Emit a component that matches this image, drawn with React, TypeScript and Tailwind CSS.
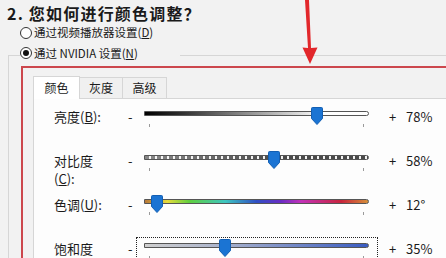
import type { ReactNode } from 'react';

type SliderRow = {
  label: ReactNode;
  value: string;
  pos: number;
  track: string;
  focused?: boolean;
};

const rows: SliderRow[] = [
  {
    label: <>亮度(<u>B</u>):</>,
    value: '78%',
    pos: 173,
    track: 'bg-[linear-gradient(90deg,#000_0%,#2a2a2a_15%,#d8d8d8_68%,#fff_80%,#fff_100%)]'
  },
  {
    label: <>对比度<br />(<u>C</u>):</>,
    value: '58%',
    pos: 130,
    track:
      'bg-[linear-gradient(90deg,rgba(255,255,255,0.35),rgba(255,255,255,0)_60%),repeating-linear-gradient(90deg,#4a4a4a_0px,#4a4a4a_4px,#f2f2f2_4px,#f2f2f2_6px)]'
  },
  {
    label: <>色调(<u>U</u>):</>,
    value: '12°',
    pos: 13,
    track:
      'bg-[linear-gradient(90deg,#b8783a_0%,#e6dc3c_10%,#5fcf3f_20%,#3ec6c0_36%,#2f4fc4_50%,#6a2cc4_61%,#c232b8_70%,#c8243c_88%,#d6903a_100%)]'
  },
  {
    label: <>饱和度</>,
    value: '35%',
    pos: 81,
    track: 'bg-[linear-gradient(90deg,#cfcfcf_0%,#aab3cc_35%,#3a5cc2_100%)]',
    focused: true
  }
];

const Thumb = ({ left }: { left: number }) => (
  <svg
    width="12"
    height="18"
    viewBox="0 0 12 18"
    className="absolute top-[-4px]"
    style={{ left: left - 6 }}
  >
    <path
      d="M1.5 0.5 H10.5 Q11.5 0.5 11.5 1.5 V11.5 L6 17.5 L0.5 11.5 V1.5 Q0.5 0.5 1.5 0.5 Z"
      fill="#1b74d3"
      stroke="#135fb3"
      strokeWidth="1"
    />
  </svg>
);

const Radio = ({ checked }: { checked?: boolean }) => (
  <span className="w-[12px] h-[12px] rounded-full border border-[#333] bg-white flex items-center justify-center shrink-0">
    {checked && <span className="w-[6px] h-[6px] rounded-full bg-[#111]" />}
  </span>
);

export default function App() {
  return (
    <div className="relative w-[446px] h-[258px] overflow-hidden bg-[#f2f2f2] text-[#1a1a1a] font-['Noto_Sans_CJK_SC',sans-serif]">
      <div className="pl-[7px] pt-[4px] h-[22px] text-[16px] leading-[18px] font-bold tracking-[1.2px]">
        2. 您如何进行颜色调整？
      </div>

      <div className="flex items-center gap-[2px] pl-[20px] h-[20px] mt-[1px] mb-[2px] text-[11.5px]">
        <Radio />
        <span>通过视频播放器设置(<u>D</u>)</span>
      </div>

      <fieldset className="ml-[8px] border-l border-t border-[#d6d6d6]">
        <legend className="ml-[11px] w-[160px] h-[20px] pb-[4px] flex items-center gap-[2px] text-[11.5px] leading-[16px]">
          <Radio checked />
          <span>通过 NVIDIA 设置(<u>N</u>)</span>
        </legend>

        <div className="mt-[1px] ml-[12px] w-[440px] border-l-2 border-t-2 border-[#cc474d] pl-[10px] pt-[7px]">
          <div className="flex items-end text-[12px]">
            <div className="w-[47px] h-[23px] bg-white border-l border-t border-r border-[#d6d6d6] flex items-center justify-center relative top-[1px]">
              颜色
            </div>
            <div className="w-[43px] h-[21px] bg-[#f0f0f0] border-t border-r border-[#d6d6d6] flex items-center justify-center">
              灰度
            </div>
            <div className="w-[44px] h-[21px] bg-[#f0f0f0] border-t border-r border-[#d6d6d6] flex items-center justify-center">
              高级
            </div>
          </div>

          <div className="bg-[#fdfdfd] border-l border-t border-[#d6d6d6] pt-[5px] h-[200px] text-[13px] leading-[16px]">
            {rows.map((row, i) => (
              <div key={i} className="flex items-start h-[44px]">
                <div className="w-[92px] pl-[20px] pt-[4px] leading-[18px]">{row.label}</div>
                <div className="w-[10px] pl-[2px] pt-[5px]">-</div>
                <div
                  className={`mt-[1px] border pl-[7px] pr-[8px] pt-[5px] h-[60px] ${
                    row.focused ? 'border-dotted border-[#222]' : 'border-transparent'
                  }`}
                >
                  <div className="relative w-[225px]">
                    <div className={`h-[5px] border border-[#555] rounded-l-[1px] rounded-r-full ${row.track}`} />
                    <Thumb left={row.pos} />
                    <div className="absolute left-[5px] top-[13px] w-px h-[3px] bg-[#9a9a9a]" />
                    <div className="absolute right-[5px] top-[13px] w-px h-[3px] bg-[#9a9a9a]" />
                  </div>
                </div>
                <div className="ml-[11px] w-[17px] pt-[5px]">+</div>
                <div className="pt-[5px]">{row.value}</div>
              </div>
            ))}
          </div>
        </div>
      </fieldset>

      <svg className="absolute left-0 top-0 pointer-events-none" width="446" height="70" viewBox="0 0 446 70">
        <path d="M305 0 L309 0 L311 48 L317.5 47.5 L310 64 L302.5 47.5 L308 48 Z" fill="#e2272b" />
      </svg>
    </div>
  );
}
